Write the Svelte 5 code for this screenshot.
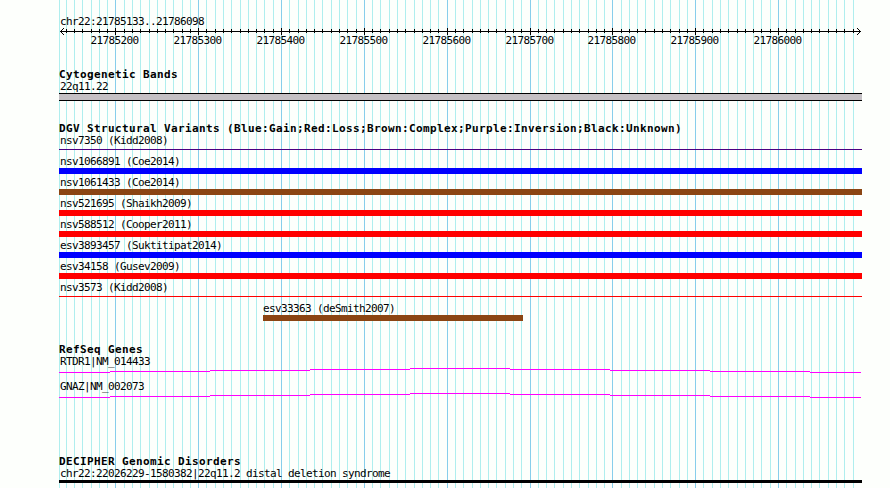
<script lang="ts">
	type Feature = {
		name: string;
		kind: string;
		offset?: number;
		width?: number;
	};

	type Track = {
		title: string;
		features: Feature[];
	};

	const LEFT = 59;
	const START = 21785133;
	const END = 21786098;

	const tracks: Track[] = [
		{
			title: 'Cytogenetic Bands',
			features: [{ name: '22q11.22', kind: 'band' }]
		},
		{
			title: 'DGV Structural Variants (Blue:Gain;Red:Loss;Brown:Complex;Purple:Inversion;Black:Unknown)',
			features: [
				{ name: 'nsv7350 (Kidd2008)', kind: 'inversion thin' },
				{ name: 'nsv1066891 (Coe2014)', kind: 'gain' },
				{ name: 'nsv1061433 (Coe2014)', kind: 'complex' },
				{ name: 'nsv521695 (Shaikh2009)', kind: 'loss' },
				{ name: 'nsv588512 (Cooper2011)', kind: 'loss' },
				{ name: 'esv3893457 (Suktitipat2014)', kind: 'gain' },
				{ name: 'esv34158 (Gusev2009)', kind: 'loss' },
				{ name: 'nsv3573 (Kidd2008)', kind: 'loss thin' },
				{ name: 'esv33363 (deSmith2007)', kind: 'complex', offset: 204, width: 260 }
			]
		},
		{
			title: 'RefSeq Genes',
			features: [
				{ name: 'RTDR1|NM_014433', kind: 'gene' },
				{ name: 'GNAZ|NM_002073', kind: 'gene' }
			]
		},
		{
			title: 'DECIPHER Genomic Disorders',
			features: [
				{ name: 'chr22:22026229-1580382|22q11.2 distal deletion syndrome', kind: 'disorder' }
			]
		}
	];

	// a line every 10 bp, a labelled one every 100 bp
	const ticks: { pos: number; x: number; major: boolean }[] = [];
	for (let pos = 21785140; pos < END; pos += 10) {
		ticks.push({
			pos,
			x: Math.floor(115.87 + (pos - 21785200) * 0.8283),
			major: pos % 100 === 0
		});
	}

	// introns are drawn as a very flat peak, one pixel per step
	const intron = [
		[0, 51, 4],
		[51, 100, 3],
		[151, 100, 2],
		[251, 100, 1],
		[351, 100, 0],
		[451, 100, 1],
		[551, 100, 2],
		[651, 100, 3],
		[751, 51, 4]
	];
</script>

<main>
	<svg class="grid" width="890" height="488" shape-rendering="crispEdges">
		<rect class="minor" x={LEFT} y="0" width="1" height="488" />
		{#each ticks as tick}
			<rect class={tick.major ? 'major' : 'minor'} x={tick.x} y="0" width="1" height="488" />
		{/each}
	</svg>

	<div class="content">
		<div class="label region">chr22:{START}..{END}</div>
		<svg class="ruler" width="803" height="19" viewBox="59 28 803 19">
			<g shape-rendering="crispEdges">
				<rect x="60" y="31" width="801" height="1" />
				{#each ticks as tick}
					<rect
						x={tick.x}
						y={tick.major ? 28 : 29}
						width="1"
						height={tick.major ? 7 : 4}
					/>
				{/each}
				<path d="M61 30h1v1h-1zM62 29h1v1h-1zM63 28h1v1h-1zM61 32h1v1h-1zM62 33h1v1h-1zM63 34h1v1h-1z" />
				<path d="M859 30h1v1h-1zM858 29h1v1h-1zM857 28h1v1h-1zM859 32h1v1h-1zM858 33h1v1h-1zM857 34h1v1h-1z" />
			</g>
			{#each ticks.filter((t) => t.major) as tick}
				<text x={tick.x - 24.5} y="44">{tick.pos}</text>
			{/each}
		</svg>

		{#each tracks as track}
			<section class:spaced={track.title.startsWith('DECIPHER')}>
				<h2>{track.title}</h2>
				{#each track.features as feature}
					<div
						class="feature {feature.kind}"
						style:margin-left={feature.offset ? `${feature.offset}px` : null}
						style:width={feature.width ? `${feature.width}px` : null}
					>
						<div class="label">{feature.name}</div>
						{#if feature.kind === 'gene'}
							<svg width="803" height="5" shape-rendering="crispEdges">
								{#each intron as [x, width, y]}
									<rect {x} {y} {width} height="1" />
								{/each}
							</svg>
						{:else}
							<div class="glyph"></div>
						{/if}
					</div>
				{/each}
			</section>
		{/each}
	</div>
</main>

<style>
	:global(body) {
		background: #fdfffc;
		overflow: hidden;
	}
	main {
		display: grid;
		width: 890px;
		height: 488px;
		overflow: hidden;
		color: #000;
		font: 11px/16px 'DejaVu Sans Mono', monospace;
	}
	.grid,
	.content {
		grid-area: 1 / 1;
	}
	svg {
		display: block;
	}
	.minor {
		fill: #afeeee;
	}
	.major {
		fill: #87ceeb;
	}
	.content {
		width: 803px;
		padding: 14px 0 0 59px;
	}
	.label,
	.ruler text {
		letter-spacing: -0.622px;
	}
	.label {
		height: 14px;
		padding-left: 1px;
		white-space: nowrap;
	}
	section {
		margin-top: 20px;
	}
	section.spaced {
		margin-top: 50px;
	}
	h2 {
		height: 12px;
		margin: 0;
		font-size: 11px;
		line-height: 16px;
		font-weight: bold;
		letter-spacing: 0.378px;
		white-space: nowrap;
	}
	.feature {
		height: 21px;
	}
	.glyph {
		height: 6px;
	}
	.complex[style] .label {
		padding-left: 0;
	}
	.band {
		height: 22px;
	}
	.band .glyph {
		border: solid #000;
		border-width: 1px 0;
		background: #c4c0c4;
	}
	.gain .glyph {
		background: #0000ff;
	}
	.loss .glyph {
		background: #ff0000;
	}
	.complex .glyph {
		background: #8b4513;
	}
	.inversion .glyph {
		background: #4b0082;
	}
	.thin .glyph {
		height: 1px;
		margin-top: 2px;
	}
	.gene {
		height: 25px;
		fill: #ff00ff;
	}
	.disorder .glyph {
		height: 3px;
		background: #000;
	}
</style>
